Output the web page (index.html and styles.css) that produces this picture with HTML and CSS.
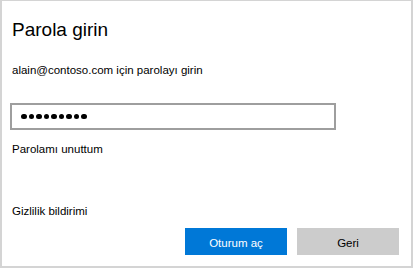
FILE: index.html
```html
<!DOCTYPE html>
<html lang="tr">
<head>
<meta charset="utf-8">
<title>Parola girin</title>
<link rel="stylesheet" href="styles.css">
</head>
<body>
<div class="frame">
  <h1 class="title">Parola girin</h1>
  <p class="subtitle">alain@contoso.com için parolayı girin</p>
  <div class="password">
    <span class="dot"></span><span class="dot"></span><span class="dot"></span><span class="dot"></span><span class="dot"></span><span class="dot"></span><span class="dot"></span><span class="dot"></span><span class="dot"></span>
  </div>
  <a class="link forgot">Parolamı unuttum</a>
  <a class="link privacy">Gizlilik bildirimi</a>
  <div class="actions">
    <button class="btn primary">Oturum aç</button>
    <button class="btn secondary">Geri</button>
  </div>
</div>
</body>
</html>
```
FILE: styles.css
```css
html, body {
  margin: 0;
  padding: 0;
  background: #ffffff;
}
body {
  width: 413px;
  height: 268px;
  font-family: "Liberation Sans", Arial, sans-serif;
  color: #000;
}
.frame {
  box-sizing: border-box;
  width: 413px;
  height: 268px;
  border-top: 1px solid #d4d4d4;
  border-left: 2px solid #d4d4d4;
  border-right: 2px solid #d4d4d4;
  border-bottom: 2px solid #d4d4d4;
  padding: 17px 12px 0 10px;
  display: flex;
  flex-direction: column;
  align-items: flex-start;
}
.title {
  margin: 0 0 0 0;
  font-size: 19px;
  font-weight: normal;
  line-height: 24px;
}
.subtitle {
  margin: 21px 0 0 0;
  font-size: 11.5px;
  line-height: 14px;
}
.password {
  box-sizing: border-box;
  margin-top: 26px;
  margin-left: -2px;
  width: 326px;
  height: 27px;
  border: 2px solid #9e9e9e;
  display: flex;
  align-items: center;
  gap: 2px;
  padding-left: 9px;
}
.dot {
  width: 5.5px;
  height: 5.5px;
  border-radius: 50%;
  background: #000;
}
.link {
  font-size: 11.5px;
  line-height: 14px;
  color: #000;
  text-decoration: none;
}
.forgot {
  margin-top: 12px;
}
.privacy {
  margin-top: 48px;
}
.actions {
  margin-top: 10px;
  align-self: stretch;
  display: flex;
  justify-content: flex-end;
  gap: 10px;
}
.btn {
  width: 102px;
  height: 27px;
  border: none;
  padding: 2px 0 0 0;
  font-family: "Liberation Sans", Arial, sans-serif;
  font-size: 11.5px;
}
.primary {
  background: #0078d7;
  color: #fff;
}
.secondary {
  background: #cccccc;
  color: #000;
}
```
